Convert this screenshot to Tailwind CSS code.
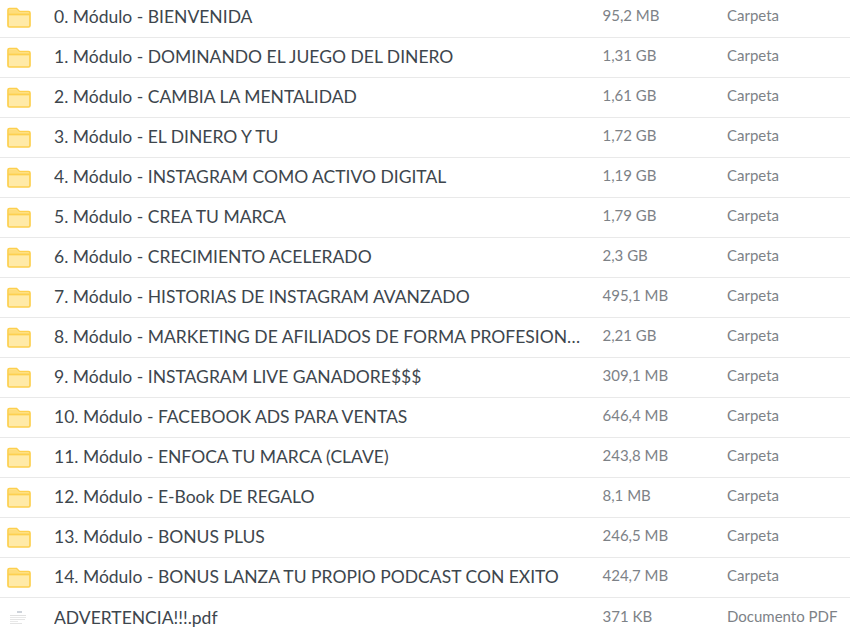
<!DOCTYPE html>
<html lang="es"><head><meta charset="utf-8">
<script src="https://cdn.jsdelivr.net/npm/@tailwindcss/browser@4"></script>
</head>
<body class="bg-white overflow-hidden font-['Lato',sans-serif]">
<svg width="0" height="0" class="absolute"><defs><symbol id="folder" viewBox="0 0 24 21"><path d="M1 18.500V3a1.500 1.500 0 0 1 1.500-1.500H9.500L12.500 4.500H21.500A1.500 1.500 0 0 1 23 6V18.500A1.500 1.500 0 0 1 21.500 20H2.500A1.500 1.500 0 0 1 1 18.500Z" fill="#ffeaa8" stroke="#fdd04f" stroke-width="1.700"/><path d="M2 2.500H9L12 5.500H22V7H2Z" fill="#fedd7c"/><path d="M1 7.500H23" stroke="#fdd04f" stroke-width="1.700"/></symbol></defs></svg>
<div class="w-[850px] h-[635px] overflow-hidden flex flex-col -mt-[2px]">
<div class="flex h-10 shrink-0 items-center border-b border-[#e9e9e9]"><div class="w-[54px] shrink-0 pl-[7px]"><svg width="24" height="21" class="block"><use href="#folder"/></svg></div><div class="w-[548.500px] shrink-0 pr-5 truncate text-[17.500px] text-[#3d464d]">0. Módulo - BIENVENIDA</div><div class="w-[124.500px] shrink-0 pb-[4px] text-[15px] text-[#7d8287]">95,2 MB</div><div class="pb-[4px] text-[15px] text-[#7d8287]">Carpeta</div></div>
<div class="flex h-10 shrink-0 items-center border-b border-[#e9e9e9]"><div class="w-[54px] shrink-0 pl-[7px]"><svg width="24" height="21" class="block"><use href="#folder"/></svg></div><div class="w-[548.500px] shrink-0 pr-5 truncate text-[17.500px] text-[#3d464d]">1. Módulo - DOMINANDO EL JUEGO DEL DINERO</div><div class="w-[124.500px] shrink-0 pb-[4px] text-[15px] text-[#7d8287]">1,31 GB</div><div class="pb-[4px] text-[15px] text-[#7d8287]">Carpeta</div></div>
<div class="flex h-10 shrink-0 items-center border-b border-[#e9e9e9]"><div class="w-[54px] shrink-0 pl-[7px]"><svg width="24" height="21" class="block"><use href="#folder"/></svg></div><div class="w-[548.500px] shrink-0 pr-5 truncate text-[17.500px] text-[#3d464d]">2. Módulo - CAMBIA LA MENTALIDAD</div><div class="w-[124.500px] shrink-0 pb-[4px] text-[15px] text-[#7d8287]">1,61 GB</div><div class="pb-[4px] text-[15px] text-[#7d8287]">Carpeta</div></div>
<div class="flex h-10 shrink-0 items-center border-b border-[#e9e9e9]"><div class="w-[54px] shrink-0 pl-[7px]"><svg width="24" height="21" class="block"><use href="#folder"/></svg></div><div class="w-[548.500px] shrink-0 pr-5 truncate text-[17.500px] text-[#3d464d]">3. Módulo - EL DINERO Y TU</div><div class="w-[124.500px] shrink-0 pb-[4px] text-[15px] text-[#7d8287]">1,72 GB</div><div class="pb-[4px] text-[15px] text-[#7d8287]">Carpeta</div></div>
<div class="flex h-10 shrink-0 items-center border-b border-[#e9e9e9]"><div class="w-[54px] shrink-0 pl-[7px]"><svg width="24" height="21" class="block"><use href="#folder"/></svg></div><div class="w-[548.500px] shrink-0 pr-5 truncate text-[17.500px] text-[#3d464d]">4. Módulo - INSTAGRAM COMO ACTIVO DIGITAL</div><div class="w-[124.500px] shrink-0 pb-[4px] text-[15px] text-[#7d8287]">1,19 GB</div><div class="pb-[4px] text-[15px] text-[#7d8287]">Carpeta</div></div>
<div class="flex h-10 shrink-0 items-center border-b border-[#e9e9e9]"><div class="w-[54px] shrink-0 pl-[7px]"><svg width="24" height="21" class="block"><use href="#folder"/></svg></div><div class="w-[548.500px] shrink-0 pr-5 truncate text-[17.500px] text-[#3d464d]">5. Módulo - CREA TU MARCA</div><div class="w-[124.500px] shrink-0 pb-[4px] text-[15px] text-[#7d8287]">1,79 GB</div><div class="pb-[4px] text-[15px] text-[#7d8287]">Carpeta</div></div>
<div class="flex h-10 shrink-0 items-center border-b border-[#e9e9e9]"><div class="w-[54px] shrink-0 pl-[7px]"><svg width="24" height="21" class="block"><use href="#folder"/></svg></div><div class="w-[548.500px] shrink-0 pr-5 truncate text-[17.500px] text-[#3d464d]">6. Módulo - CRECIMIENTO ACELERADO</div><div class="w-[124.500px] shrink-0 pb-[4px] text-[15px] text-[#7d8287]">2,3 GB</div><div class="pb-[4px] text-[15px] text-[#7d8287]">Carpeta</div></div>
<div class="flex h-10 shrink-0 items-center border-b border-[#e9e9e9]"><div class="w-[54px] shrink-0 pl-[7px]"><svg width="24" height="21" class="block"><use href="#folder"/></svg></div><div class="w-[548.500px] shrink-0 pr-5 truncate text-[17.500px] text-[#3d464d]">7. Módulo - HISTORIAS DE INSTAGRAM AVANZADO</div><div class="w-[124.500px] shrink-0 pb-[4px] text-[15px] text-[#7d8287]">495,1 MB</div><div class="pb-[4px] text-[15px] text-[#7d8287]">Carpeta</div></div>
<div class="flex h-10 shrink-0 items-center border-b border-[#e9e9e9]"><div class="w-[54px] shrink-0 pl-[7px]"><svg width="24" height="21" class="block"><use href="#folder"/></svg></div><div class="w-[548.500px] shrink-0 pr-5 truncate text-[17.500px] text-[#3d464d]">8. Módulo - MARKETING DE AFILIADOS DE FORMA PROFESIONAL</div><div class="w-[124.500px] shrink-0 pb-[4px] text-[15px] text-[#7d8287]">2,21 GB</div><div class="pb-[4px] text-[15px] text-[#7d8287]">Carpeta</div></div>
<div class="flex h-10 shrink-0 items-center border-b border-[#e9e9e9]"><div class="w-[54px] shrink-0 pl-[7px]"><svg width="24" height="21" class="block"><use href="#folder"/></svg></div><div class="w-[548.500px] shrink-0 pr-5 truncate text-[17.500px] text-[#3d464d]">9. Módulo - INSTAGRAM LIVE GANADORE$$$</div><div class="w-[124.500px] shrink-0 pb-[4px] text-[15px] text-[#7d8287]">309,1 MB</div><div class="pb-[4px] text-[15px] text-[#7d8287]">Carpeta</div></div>
<div class="flex h-10 shrink-0 items-center border-b border-[#e9e9e9]"><div class="w-[54px] shrink-0 pl-[7px]"><svg width="24" height="21" class="block"><use href="#folder"/></svg></div><div class="w-[548.500px] shrink-0 pr-5 truncate text-[17.500px] text-[#3d464d]">10. Módulo - FACEBOOK ADS PARA VENTAS</div><div class="w-[124.500px] shrink-0 pb-[4px] text-[15px] text-[#7d8287]">646,4 MB</div><div class="pb-[4px] text-[15px] text-[#7d8287]">Carpeta</div></div>
<div class="flex h-10 shrink-0 items-center border-b border-[#e9e9e9]"><div class="w-[54px] shrink-0 pl-[7px]"><svg width="24" height="21" class="block"><use href="#folder"/></svg></div><div class="w-[548.500px] shrink-0 pr-5 truncate text-[17.500px] text-[#3d464d]">11. Módulo - ENFOCA TU MARCA (CLAVE)</div><div class="w-[124.500px] shrink-0 pb-[4px] text-[15px] text-[#7d8287]">243,8 MB</div><div class="pb-[4px] text-[15px] text-[#7d8287]">Carpeta</div></div>
<div class="flex h-10 shrink-0 items-center border-b border-[#e9e9e9]"><div class="w-[54px] shrink-0 pl-[7px]"><svg width="24" height="21" class="block"><use href="#folder"/></svg></div><div class="w-[548.500px] shrink-0 pr-5 truncate text-[17.500px] text-[#3d464d]">12. Módulo - E-Book DE REGALO</div><div class="w-[124.500px] shrink-0 pb-[4px] text-[15px] text-[#7d8287]">8,1 MB</div><div class="pb-[4px] text-[15px] text-[#7d8287]">Carpeta</div></div>
<div class="flex h-10 shrink-0 items-center border-b border-[#e9e9e9]"><div class="w-[54px] shrink-0 pl-[7px]"><svg width="24" height="21" class="block"><use href="#folder"/></svg></div><div class="w-[548.500px] shrink-0 pr-5 truncate text-[17.500px] text-[#3d464d]">13. Módulo - BONUS PLUS</div><div class="w-[124.500px] shrink-0 pb-[4px] text-[15px] text-[#7d8287]">246,5 MB</div><div class="pb-[4px] text-[15px] text-[#7d8287]">Carpeta</div></div>
<div class="flex h-10 shrink-0 items-center border-b border-[#e9e9e9]"><div class="w-[54px] shrink-0 pl-[7px]"><svg width="24" height="21" class="block"><use href="#folder"/></svg></div><div class="w-[548.500px] shrink-0 pr-5 truncate text-[17.500px] text-[#3d464d]">14. Módulo - BONUS LANZA TU PROPIO PODCAST CON EXITO</div><div class="w-[124.500px] shrink-0 pb-[4px] text-[15px] text-[#7d8287]">424,7 MB</div><div class="pb-[4px] text-[15px] text-[#7d8287]">Carpeta</div></div>
<div class="flex h-10 shrink-0 items-center"><div class="w-[54px] shrink-0 pl-[10px]"><svg width="17" height="14" viewBox="0 0 17 14" class="block"><rect x="7" y="0" width="5" height="2" fill="#ced3da"/><rect x="0" y="4" width="16" height="1" fill="#e0e0e0"/><rect x="0" y="6" width="16" height="1" fill="#e8e8e8"/><rect x="0" y="8" width="15" height="1" fill="#e4e4e4"/><rect x="0" y="10" width="8" height="1" fill="#e8e8e8"/><rect x="0" y="12" width="12" height="1" fill="#e4e4e4"/></svg></div><div class="w-[548.500px] shrink-0 pr-5 truncate text-[17.500px] text-[#3d464d]">ADVERTENCIA!!!.pdf</div><div class="w-[124.500px] shrink-0 pb-[4px] text-[15px] text-[#7d8287]">371 KB</div><div class="pb-[4px] text-[15px] text-[#7d8287]">Documento PDF</div></div>
</div>
</body></html>
